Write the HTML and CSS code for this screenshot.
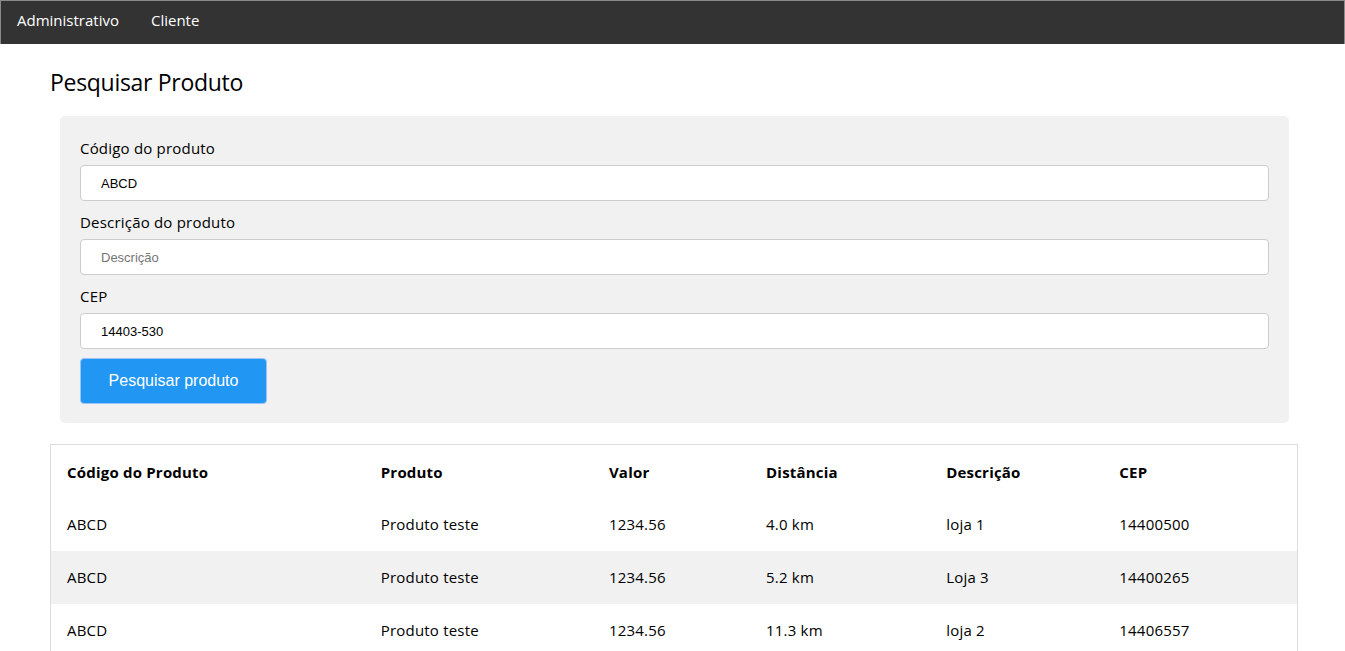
FILE: index.html
```html
<!DOCTYPE html>
<html lang="pt-BR">
<head>
<meta charset="utf-8">
<title>Pesquisar Produto</title>
<link rel="stylesheet" href="styles.css">
</head>
<body>
<nav class="topbar">
  <a class="bar-item" href="#">Administrativo</a>
  <a class="bar-item" href="#">Cliente</a>
</nav>
<main class="container">
  <h3 class="title">Pesquisar Produto</h3>
  <form class="panel">
    <label class="field-label" for="codigo">Código do produto</label>
    <input class="field" id="codigo" type="text" value="ABCD">
    <label class="field-label" for="descricao">Descrição do produto</label>
    <input class="field" id="descricao" type="text" placeholder="Descrição">
    <label class="field-label" for="cep">CEP</label>
    <input class="field" id="cep" type="text" value="14403-530">
    <button class="btn" type="button">Pesquisar produto</button>
  </form>
  <table class="results">
    <colgroup>
      <col class="c1"><col class="c2"><col class="c3"><col class="c4"><col class="c5"><col class="c6">
    </colgroup>
    <thead>
      <tr><th>Código do Produto</th><th>Produto</th><th>Valor</th><th>Distância</th><th>Descrição</th><th>CEP</th></tr>
    </thead>
    <tbody>
      <tr><td>ABCD</td><td>Produto teste</td><td>1234.56</td><td>4.0 km</td><td>loja 1</td><td>14400500</td></tr>
      <tr><td>ABCD</td><td>Produto teste</td><td>1234.56</td><td>5.2 km</td><td>Loja 3</td><td>14400265</td></tr>
      <tr><td>ABCD</td><td>Produto teste</td><td>1234.56</td><td>11.3 km</td><td>loja 2</td><td>14406557</td></tr>
    </tbody>
  </table>
</main>
</body>
</html>
```

FILE: styles.css
```css
* { box-sizing: border-box; }
html, body {
  margin: 0;
  padding: 0;
  background: #fff;
  color: #000;
  font-family: "Segoe UI", "Open Sans", "Noto Sans", sans-serif;
  font-size: 15px;
  line-height: 1.5;
}
.topbar {
  display: flex;
  height: 44px;
  background: #333;
  border: 1px solid #8a8a8a;
  border-bottom: none;
}
.bar-item {
  color: #fff;
  text-decoration: none;
  padding: 6px 16px;
  font-size: 15px;
  line-height: 26px;
}
.container {
  padding: 0 47px 0 50px;
}
.title {
  margin: 0;
  padding: 22px 0 18px;
  font-size: 23px;
  font-weight: 400;
  line-height: 32px;
  letter-spacing: -0.3px;
}
.panel {
  display: flex;
  flex-direction: column;
  align-items: stretch;
  margin: 0 9px 0 10px;
  padding: 21px 20px 19px;
  background: #f1f1f1;
  border-radius: 5px;
}
.field-label {
  display: block;
  font-size: 15px;
  line-height: 22px;
  margin: 10px 0 6px;
  letter-spacing: 0.2px;
}
.field-label:first-child { margin-top: 0; }
.field {
  height: 36px;
  padding: 0 20px;
  border: 1px solid #ccc;
  border-radius: 4px;
  background: #fff;
  font-family: "Liberation Sans", Arial, sans-serif;
  font-size: 13px;
  color: #000;
}
.field::placeholder { color: #757575; }
.btn {
  align-self: flex-start;
  margin-top: 9px;
  height: 46px;
  width: 187px;
  padding: 0;
  background: #2196f3;
  color: #fff;
  border: 1px solid #9ac4f5;
  border-radius: 4px;
  font-family: "Liberation Sans", Arial, sans-serif;
  font-size: 16px;
}
.results {
  width: 100%;
  margin-top: 21px;
  border-collapse: collapse;
  border: 1px solid #ddd;
  table-layout: fixed;
}
.c1 { width: 314px; }
.c2 { width: 228px; }
.c3 { width: 157px; }
.c4 { width: 180px; }
.c5 { width: 173px; }
.c6 { width: 194px; }
.results th, .results td {
  text-align: left;
  padding: 0 16px;
  font-size: 15px;
  letter-spacing: 0.2px;
}
.results th {
  height: 54px;
  font-weight: 700;
}
.results td { height: 53px; }
.results tbody tr:nth-child(1) td { height: 52px; }
.results tbody tr:nth-child(2) { background: #f1f1f1; }
```
